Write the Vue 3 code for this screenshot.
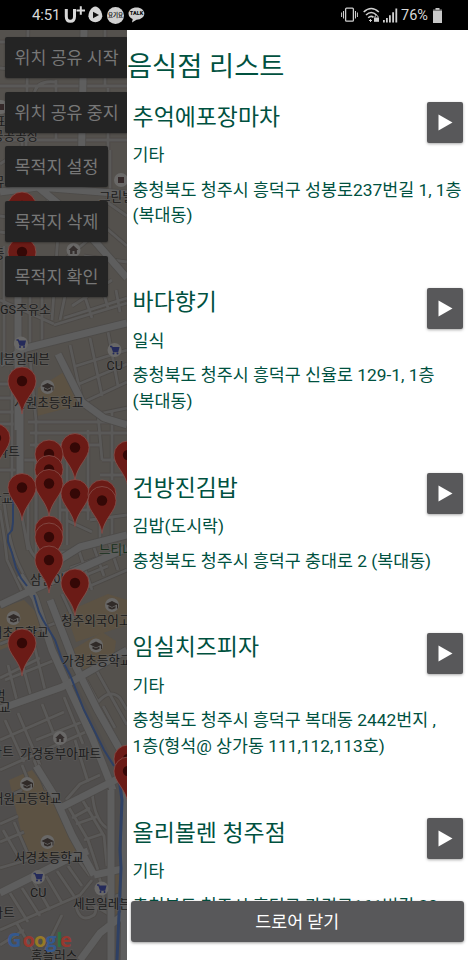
<script setup>
const controls = ['위치 공유 시작', '위치 공유 중지', '목적지 설정', '목적지 삭제', '목적지 확인']

const restaurants = [
  { name: '추억에포장마차', kind: '기타', address: ['충청북도 청주시 흥덕구 성봉로237번길 1, 1층', '(복대동)'] },
  { name: '바다향기', kind: '일식', address: ['충청북도 청주시 흥덕구 신율로 129-1, 1층', '(복대동)'] },
  { name: '건방진김밥', kind: '김밥(도시락)', address: ['충청북도 청주시 흥덕구 충대로 2 (복대동)'] },
  { name: '임실치즈피자', kind: '기타', address: ['충청북도 청주시 흥덕구 복대동 2442번지 ,', '1층(형석@ 상가동 111,112,113호)'] },
  { name: '올리볼렌 청주점', kind: '기타', address: ['충청북도 청주시 흥덕구 가경로161번길 20'] }
]

const lanes = [
  'M0 42H127M0 68L22 70M0 86H127M28 30L26 150M56 80V140M34 95Q36 80 55 82M105 30V86M0 108L34 112M22 110V180M0 140H82M84 140H127M108 88V150M0 164L22 150',
  'M110 150V190M0 216L40 222M0 232L44 238M48 190V240M60 206L52 320M88 240L62 262M72 262L60 320M98 262L70 290M112 280L72 306M127 298L64 318M84 256L127 262M92 216L127 246M104 200L127 216M80 282L92 318M98 274L108 308M116 290L120 312M0 300L54 324M4 246V354M30 290V350M42 296V345',
  'M54 325L127 303M70 345L82 400M76 366L127 350M79 384L127 364M84 402L127 382M90 338L102 396M108 332L118 386M84 402L98 414L127 408M98 414L102 460M28 422H127M30 433H127M30 445H100M30 358L36 420M36 420V560M60 450V545M67 450V545M88 430V520M112 412V480M102 460H127M100 475H127M0 384H20M0 398H20M0 412H20M12 370V430M12 430V490M0 424H18M0 470H20',
  'M24 460H36V530Q37 550 50 552H70M28 480V540Q30 560 48 562M60 510H90M66 520L92 532M0 510Q5 540 7 560L23 594M4 500Q8 540 18 563L32 592M78 548L92 590M92 542L104 576M108 540L118 570M70 568L98 558M74 580L108 566M76 592L127 570M62 594L74 620M20 505L28 550M90 520L127 515M100 515V540M112 516V538',
  'M0 644L58 622M0 678L40 658M8 665L18 705M20 655L32 700M34 644L45 690M5 680L55 660M94 666L127 725M86 680L98 702Q110 688 120 698L127 710M103 706L115 728M0 740L64 712M18 713L40 765M36 740L82 722M42 704L60 750M64 697L83 744M0 770L90 730M22 765L28 780M34 760L46 790M75 740L88 782M0 800L22 790M5 720L24 762',
  'M66 800L80 784L100 775M72 818L90 808M68 806L88 840L98 870M80 796L104 836L107 866M92 790Q94 824 111 830M76 824L99 816M84 840L102 834M0 824L18 816M0 842L24 832M3 830L18 856M14 822L27 852M0 868L34 858M10 893L28 922M22 888L40 916M34 882L50 910M46 876L62 903M57 871L74 896M68 866L82 886M78 860L90 876M0 930L80 895L92 880M16 922L34 952M0 945L24 930M76 906Q80 924 94 915Q100 905 87 902M98 870L104 900L127 892M92 904L127 925M45 950L62 915'
]

const streets = [
  'M84 30L81 180M0 192L38 187L127 194M38 150V187L72 215L127 278M18 230V430',
  'M20 350V500L5 500M0 364L26 348L127 323M58 354L82 402L104 418L127 425',
  'M0 605L32 590L56 562L80 547L127 535M32 590L127 548',
  'M20 575L35 598L52 650L70 690L92 737L113 790',
  'M50 600L76 667L97 709L127 762',
  'M0 709L62 687L127 650',
  'M62 807L127 774M36 766L54 795L72 835L94 875M0 893L72 857L88 851M94 875L127 868M80 960L100 933L127 912M111 790V960M126 790L124 960'
]

const blocks = [
  { d: 'M38 388L67 370L79 405L37 416Z', fill: '#5c5243' },
  { d: 'M0 608L24 600L42 618L46 632L0 650Z', fill: '#5c5243' },
  { d: 'M66 612L108 594L127 600V625L76 642Z', fill: '#5c5243' },
  { d: 'M72 650L102 632L116 641L114 656L84 670Z', fill: '#5c5243' },
  { d: 'M9 780L32 770L47 790L77 852L28 862Z', fill: '#5c5243' },
  { d: 'M113 870L126 860L121 908L112 920Z', fill: '#5a5144' }
]

const labels = [
  { x: -8, y: 140, t: '공공공장' }, { x: -6, y: 126, t: '표' }, { x: -7, y: 186, t: '뮤' },
  { x: 99, y: 201, t: '그린빌' }, { x: -7, y: 258, t: '등' }, { x: 0, y: 314, t: 'GS주유소' },
  { x: -8, y: 363, t: '세븐일레븐' }, { x: 106.5, y: 370, t: 'CU' }, { x: 14, y: 407, t: '서원초등학교' },
  { x: -15, y: 456, t: '아파트' }, { x: -10, y: 503, t: '판교' }, { x: 99, y: 554, t: '느티나무', c: '#17301c' },
  { x: 30, y: 584, t: '삼일아' }, { x: 61, y: 625, t: '청주외국어고' }, { x: -21, y: 637, t: '복대초등학교' },
  { x: 62, y: 665, t: '가경초등학교' }, { x: -6, y: 700, t: '범' }, { x: -1, y: 712, t: '교' },
  { x: -21, y: 756, t: '아파트' }, { x: 20, y: 758, t: '가경동부아파트' }, { x: -8, y: 803, t: '서원고등학교' },
  { x: 14, y: 862, t: '서경초등학교' }, { x: 30, y: 897, t: 'CU' }, { x: 73, y: 908, t: '세븐일레븐' },
  { x: -20, y: 917, t: '아파트' }, { x: 31, y: 960, t: '홈플러스' }
]

const places = [
  { x: 47.5, y: 387, k: 'school' }, { x: 112, y: 605, k: 'school' }, { x: 13.5, y: 618, k: 'school' },
  { x: 96, y: 645.5, k: 'school' }, { x: 27, y: 784, k: 'school' }, { x: 47.5, y: 842, k: 'school' },
  { x: 73.5, y: 250, k: 'house' }, { x: 60, y: 738, k: 'house' },
  { x: 21, y: 343.5, k: 'cart' }, { x: 114.5, y: 350, k: 'cart' }, { x: 38, y: 877, k: 'cart' }, { x: 101.5, y: 888.5, k: 'cart' },
  { x: 121, y: 180, k: 'shop' }, { x: 1, y: 107, k: 'shop' }
]

const pins = [
  [22, 206], [22, 252], [22, 381], [-4, 438], [75, 447.5], [49, 454], [49, 469.5], [49, 483.5], [22, 487.5],
  [128, 455], [75, 493.5], [102, 494], [102, 500.5], [49, 530], [49, 537], [49, 560], [75, 583], [22, 643],
  [128, 759], [128, 771]
]

const river = 'M13 500V522L12 530L8 535V542L12 553L16 568L21 578L27 586M34 595L39 612L43 620L55 640L62 660L70 675L84 710L104 750L114 766'
const canal = 'M119 778L122 800L120 850L121 868L117 960'
const googleLetters = [
  { x: 7, c: '#34598f', t: 'G' }, { x: 22.5, c: '#98382f', t: 'o' }, { x: 34, c: '#967a26', t: 'o' },
  { x: 45.5, c: '#34598f', t: 'g' }, { x: 56.3, c: '#2c7043', t: 'l' }, { x: 60, c: '#98382f', t: 'e' }
]
</script>

<template>
  <div class="phone">
    <header class="status">
      <div class="status-left">
        <span class="clock">4:51</span>
        <svg class="carrier" width="23" height="20" viewBox="0 0 23 20" fill="none" stroke="#d8d8d8">
          <path d="M2.3 5V12.5Q2.3 17.3 6.4 17.3T10.5 12.5V5" stroke-width="3" />
          <path d="M12.5 6.5H21M16.8 2.2V10.8" stroke-width="2" />
        </svg>
        <svg class="egg" width="15" height="18" viewBox="0 0 15 18">
          <path d="M7.3 .5C11 .5 14.3 6 14.3 10.3A7 6.8 0 0 1 .4 10.3C.4 6 3.6.5 7.3.5Z" fill="#d6d6d6" />
          <path d="M5 5.8L11 9L5 12.2Z" fill="#111" />
        </svg>
        <span class="yogiyo">요기요</span>
        <span class="talk">
          <svg width="17" height="16" viewBox="0 0 17 16">
            <path d="M8.5.5C13 .5 16.3 3.2 16.3 6.6S13 12.7 8.5 12.7L4 15.5L4.7 12C2 11 .5 9 .5 6.6C.5 3.2 4 .5 8.5.5Z" fill="#d0d0d0" />
          </svg>
          <em>TALK</em>
        </span>
      </div>
      <div class="status-right">
        <svg width="17" height="16" viewBox="0 0 17 16" fill="none" stroke="#cfcfcf" stroke-width="1.3">
          <rect x="4.6" y="1.2" width="7.8" height="13" rx="1" />
          <path d="M2.5 4V11.5M.6 5.5V10M14.5 4V11.5M16.4 5.5V10" stroke-width="1" />
        </svg>
        <svg class="wifi" width="17" height="16" viewBox="0 0 17 16" fill="none" stroke="#cfcfcf" stroke-width="1.6">
          <path d="M.7 5Q8.2-2 15.8 5M3 8Q8.2 3 13.5 8M5.2 10.8Q8 8 10.5 10.4" />
          <path d="M6 13.5H9M7.5 12V15" stroke-width="1" />
          <rect x="11" y="10.5" width="5" height="4.3" fill="#cfcfcf" stroke="none" />
          <path d="M12 10.5V9.2Q13.5 7.5 15 9.2V10.5" stroke-width="1" />
        </svg>
        <svg class="signal" width="15" height="15" viewBox="0 0 15 15" fill="#cfcfcf">
          <path d="M0 12H1.8V14.5H0ZM3 10H4.8V14.5H3ZM6 7.2H7.8V14.5H6ZM9.2 4.2H11V14.5H9.2ZM12.4 .5H14.2V14.5H12.4Z" />
        </svg>
        <span class="percent">76%</span>
        <svg width="9" height="15" viewBox="0 0 9 15">
          <path d="M2.5 0H6.5V1.7H9V15H0V1.7H2.5Z" fill="#c8c8c8" /><path d="M0 1.7H9V3H0Z" fill="#777" />
        </svg>
      </div>
    </header>

    <div class="body">
      <section class="map-pane">
        <svg class="map" width="127" height="930" viewBox="0 30 127 930">
          <defs>
            <g id="pin">
              <path d="M0 33C-1.6 18-14 11-14 0A14 14 0 1 1 14 0C14 11 1.6 18 0 33Z" fill="#6b1b16" stroke="#86504b" stroke-width=".8" />
              <circle r="5.2" fill="#340806" />
            </g>
            <g id="school">
              <path d="M0-4L6-1L0 2L-6-1ZM-3.5 1V3.3Q0 5.6 3.5 3.3V1L0 2.8ZM5-1H6V3.5H5Z" fill="#302a28" />
            </g>
            <g id="house">
              <path d="M0-4.5L4.8 0H3.4V4H1V1H-1V4H-3.4V0H-4.8Z" fill="#352f2e" />
            </g>
            <g id="cart">
              <path d="M-4.5-3.5H-2.8L-1 1.5H3.2L4.2-2.4H-2.4M-2 0H3.8M-1.7-1.2H4" fill="none" stroke="#242a5a" stroke-width="1.3" />
              <circle cx="-1" cy="3.5" r="1" fill="#242a5a" /><circle cx="3" cy="3.5" r="1" fill="#242a5a" />
            </g>
            <g id="shop"><rect x="-3" y="-3" width="6" height="6" fill="#35292a" /></g>
          </defs>
          <rect y="30" width="127" height="930" fill="#54514d" />
          <path d="M0 540L25 580L60 650L127 790V960H0Z" fill="#504e4d" />
          <path v-for="b in blocks" :key="b.d" :d="b.d" :fill="b.fill" />
          <g class="lane-edge"><path v-for="d in lanes" :key="d" :d="d" /></g>
          <g class="lane"><path v-for="d in lanes" :key="d" :d="d" /></g>
          <g class="street-edge"><path v-for="d in streets" :key="d" :d="d" /></g>
          <g class="street"><path v-for="d in streets" :key="d" :d="d" /></g>
          <path class="water" :d="river" />
          <path class="water wide" :d="canal" />
          <g v-for="(p, i) in places" :key="'p' + i" :transform="`translate(${p.x} ${p.y})`">
            <circle r="7" fill="#696867" />
            <use :href="'#' + p.k" />
          </g>
          <text v-for="(l, i) in labels" :key="'l' + i" class="label" :x="l.x" :y="l.y" :fill="l.c || '#1b1b1b'">{{ l.t }}</text>
          <use v-for="(p, i) in pins" :key="'m' + i" href="#pin" :x="p[0]" :y="p[1]" />
          <text class="google" y="947"><tspan v-for="g in googleLetters" :key="g.x" :x="g.x" :fill="g.c">{{ g.t }}</tspan></text>
        </svg>
        <div class="controls">
          <button v-for="c in controls" :key="c" class="control">{{ c }}</button>
        </div>
      </section>

      <aside class="drawer">
        <h1>음식점 리스트</h1>
        <div class="list">
          <article v-for="r in restaurants" :key="r.name" class="item">
            <div class="info">
              <h2>{{ r.name }}</h2>
              <p class="kind">{{ r.kind }}</p>
              <p v-for="line in r.address" :key="line" class="line">{{ line }}</p>
            </div>
            <button class="go" :aria-label="r.name">
              <svg width="15" height="17" viewBox="0 0 15 17"><path d="M.5 .5L14.5 8.5L.5 16.5Z" fill="#fff" /></svg>
            </button>
          </article>
        </div>
        <button class="close">드로어 닫기</button>
      </aside>
    </div>
  </div>
</template>

<style>
body {
  background: #fff;
}
</style>

<style scoped>
.phone {
  width: 468px;
  height: 960px;
  display: flex;
  flex-direction: column;
  overflow: hidden;
  font-family: Roboto, "Noto Sans CJK KR", sans-serif;
  font-weight: 400;
}
button {
  border: 0;
  margin: 0;
  font: inherit;
}
.status {
  height: 30px;
  flex: none;
  background: #000;
  color: #d8d8d8;
  display: flex;
  justify-content: space-between;
  align-items: center;
  padding: 0 26px 0 32px;
  box-sizing: border-box;
}
.status-left,
.status-right {
  display: flex;
  align-items: center;
}
.clock {
  font-size: 15px;
  width: 32px;
  letter-spacing: -0.2px;
}
.carrier {
  margin: 0 1px 2px 0;
}
.yogiyo {
  width: 17px;
  height: 17px;
  margin-left: 4px;
  border-radius: 50%;
  background: #d0d0d0;
  color: #222;
  font-size: 5.5px;
  font-weight: 700;
  line-height: 17px;
  text-align: center;
  white-space: nowrap;
}
.talk {
  display: grid;
  margin-left: 4px;
  width: 17px;
  height: 16px;
}
.talk svg,
.talk em {
  grid-area: 1 / 1;
}
.talk em {
  font: 900 5.5px/13px Roboto, sans-serif;
  color: #111;
  text-align: center;
}
.wifi {
  margin-left: 5px;
}
.signal {
  margin-left: 3px;
}
.percent {
  font-size: 14.5px;
  width: 32px;
  margin-left: 3px;
}
.body {
  flex: 1;
  display: flex;
  min-height: 0;
}
.map-pane {
  width: 127px;
  flex: none;
  display: grid;
  overflow: hidden;
}
.map,
.controls {
  grid-area: 1 / 1;
}
.map {
  display: block;
}
.controls {
  display: flex;
  flex-direction: column;
  align-items: flex-start;
  gap: 13.7px;
  padding: 7px 0 0 5px;
}
.control {
  height: 41px;
  padding: 2px 9.6px 0;
  background: #242424;
  color: #777;
  font-size: 17.3px;
  line-height: 39px;
  white-space: nowrap;
  border-radius: 2px;
  box-shadow: 0 1px 2px rgba(0, 0, 0, 0.3);
}
.lane-edge,
.lane,
.street-edge,
.street {
  fill: none;
  stroke-linejoin: round;
}
.lane-edge {
  stroke: #4c4946;
  stroke-width: 4.4;
}
.lane {
  stroke: #5a5958;
  stroke-width: 2.8;
}
.street-edge {
  stroke: #4d4b49;
  stroke-width: 8.6;
}
.street {
  stroke: #5e5e5e;
  stroke-width: 7;
}
.water {
  fill: none;
  stroke: #2e4064;
  stroke-width: 2;
}
.water.wide {
  stroke-width: 3;
}
.label {
  font-size: 12.6px;
  paint-order: stroke;
  stroke: #62616080;
  stroke-width: 1.6px;
}
.google {
  font: 700 20px "Open Sans", sans-serif;
}
.drawer {
  flex: 1;
  min-width: 0;
  display: flex;
  flex-direction: column;
  background: #fff;
  color: #00513f;
  padding-bottom: 18px;
}
h1,
h2,
p {
  margin: 0;
  font-weight: 400;
  white-space: nowrap;
}
h1 {
  font-size: 27.3px;
  line-height: 40px;
  padding: 17px 0 12px;
  flex: none;
}
.list {
  flex: 1;
  min-height: 0;
  overflow: hidden;
  padding: 0 4.6px 0 5.6px;
}
.item {
  display: flex;
  justify-content: space-between;
  align-items: flex-start;
  padding-bottom: 55.3px;
}
.info {
  width: 0;
  flex: 1;
  padding-top: 1.9px;
}
h2 {
  font-size: 22.9px;
  line-height: 34px;
}
.kind {
  font-size: 17.3px;
  line-height: 25.6px;
  margin: 8.5px 0 8.9px;
}
.line {
  font-size: 17.35px;
  line-height: 25.6px;
}
.go {
  width: 36px;
  height: 41px;
  margin-top: 3.4px;
  padding: 0;
  background: #58585a;
  border-radius: 2px;
  display: flex;
  align-items: center;
  justify-content: center;
  box-shadow: 0 1px 3px rgba(0, 0, 0, 0.35);
}
.close {
  flex: none;
  height: 41px;
  margin: 0 4.5px 0 4px;
  padding: 2px 0 0;
  background: #58585a;
  color: #fff;
  font-size: 17.3px;
  line-height: 39px;
  border-radius: 3px;
  box-shadow: 0 1px 3px rgba(0, 0, 0, 0.4);
}
</style>
